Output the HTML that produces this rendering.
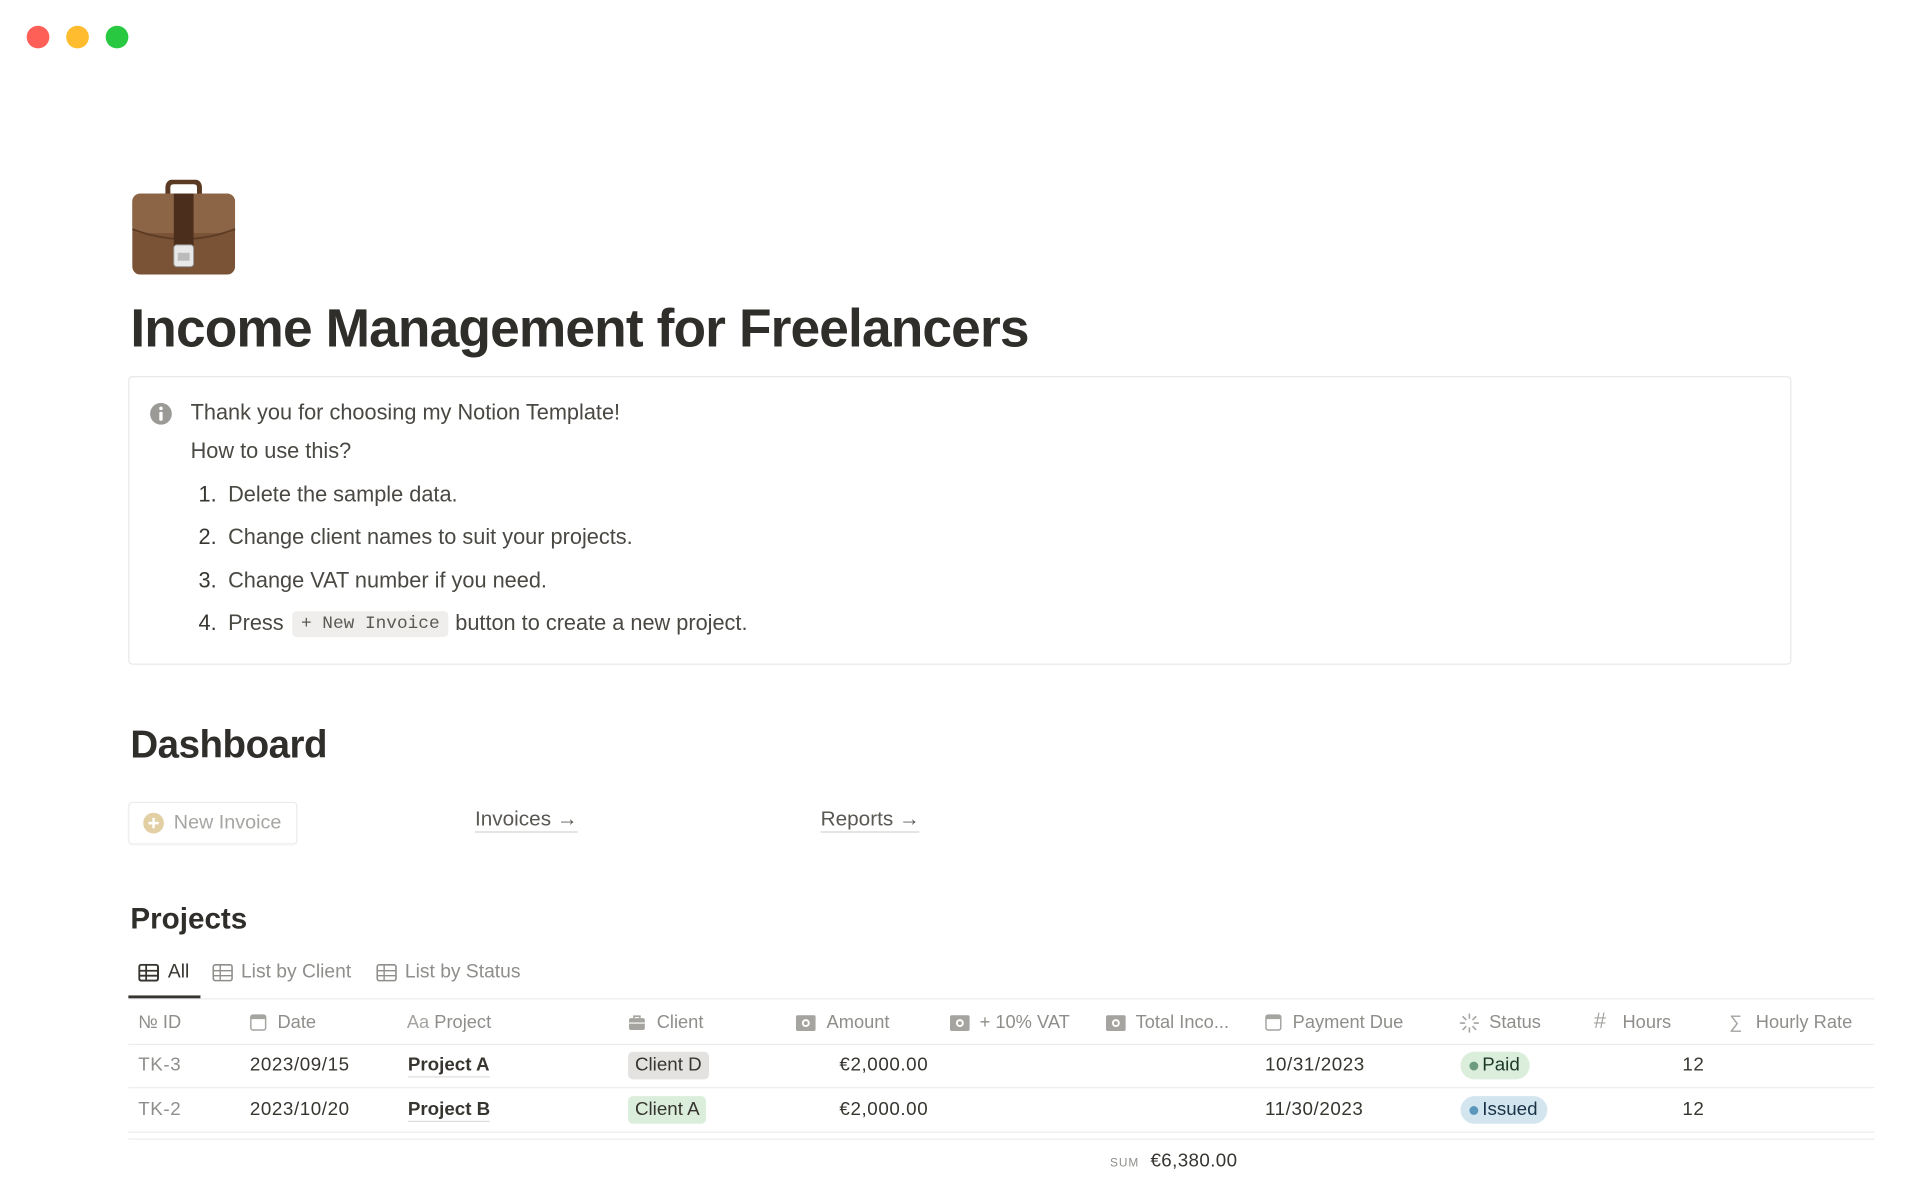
<!DOCTYPE html>
<html><head><meta charset="utf-8">
<style>
*{margin:0;padding:0;box-sizing:border-box}
body{width:1920px;height:1200px;background:#fff;position:relative;overflow:hidden;font-family:"Liberation Sans",sans-serif;color:#37352f}
#w{position:absolute;left:0;top:2px;width:1945px;height:1216px;transform:scale(.9875);transform-origin:0 0}
.a{position:absolute;white-space:nowrap}
.dot{position:absolute;width:23px;height:23px;border-radius:50%;top:24px}
.t{font-size:22px;color:#4a4843}
.h{font-size:18.5px;color:#8f8e8a;top:1022px}
.c{font-size:19px;top:1066px;letter-spacing:.6px}
.c2{font-size:19px;top:1111px;letter-spacing:.6px}
.chip{position:absolute;border-radius:5px;font-size:19px;padding:0 7px;height:28px;line-height:28px}
.ico{position:absolute;top:1024px}
.hl{position:absolute;left:130px;width:1768px;height:1px;background:#e9e9e7}
</style></head><body><div id="w">
<div class="dot" style="left:27px;background:#fe5f57"></div>
<div class="dot" style="left:67px;background:#febc2e"></div>
<div class="dot" style="left:107px;background:#28c840"></div>

<svg class="a" style="left:132px;top:180px" width="108" height="98" viewBox="0 0 108 98">
<path d="M38 16 V8 Q38 2 44 2 H64 Q70 2 70 8 V16" fill="none" stroke="#5a3a22" stroke-width="5"/>
<rect x="2" y="14" width="104" height="82" rx="8" fill="#7a5236"/>
<rect x="2" y="14" width="104" height="40" rx="8" fill="#8c6446"/>
<path d="M2 50 Q54 70 106 50" fill="none" stroke="#5e3c24" stroke-width="2"/>
<rect x="44" y="14" width="20" height="62" fill="#4b2f1c"/>
<rect x="44" y="66" width="20" height="22" rx="3" fill="#e8e8e8" stroke="#999" stroke-width="1"/>
<rect x="48" y="74" width="12" height="8" fill="#bbb"/>
</svg>

<div class="a" style="left:132px;top:300px;font-size:54px;font-weight:bold;letter-spacing:-0.9px;color:#2f2e2a">Income Management for Freelancers</div>

<div class="a" style="left:130px;top:379px;width:1684px;height:292px;border:1.5px solid #e3e2df;border-radius:4px"></div>
<svg class="a" style="left:151px;top:405px" width="24" height="24" viewBox="0 0 24 24"><circle cx="12" cy="12" r="11" fill="#9b9a97"/><circle cx="12" cy="6.5" r="1.8" fill="#fff"/><rect x="10.3" y="10" width="3.4" height="9" rx="1" fill="#fff"/></svg>
<div class="a t" style="left:193px;top:403px">Thank you for choosing my Notion Template!</div>
<div class="a t" style="left:193px;top:442px">How to use this?</div>
<div class="a t" style="left:201px;top:486px;color:#37352f">1.</div><div class="a t" style="left:231px;top:486px">Delete the sample data.</div>
<div class="a t" style="left:201px;top:529px;color:#37352f">2.</div><div class="a t" style="left:231px;top:529px">Change client names to suit your projects.</div>
<div class="a t" style="left:201px;top:573px;color:#37352f">3.</div><div class="a t" style="left:231px;top:573px">Change VAT number if you need.</div>
<div class="a t" style="left:201px;top:616px;color:#37352f">4.</div><div class="a t" style="left:231px;top:616px">Press</div>
<div class="a" style="left:296px;top:617px;width:158px;height:26px;background:#efeeec;border-radius:4px;font-family:'Liberation Mono',monospace;font-size:18px;line-height:26px;text-align:center;color:#5a5853">+ New Invoice</div>
<div class="a t" style="left:461px;top:616px">button to create a new project.</div>

<div class="a" style="left:132px;top:731px;font-size:39px;font-weight:bold;color:#2f2e2a;letter-spacing:-0.5px">Dashboard</div>

<div class="a" style="left:130px;top:810px;width:171px;height:43px;border:1px solid #e9e9e7;border-radius:4px;box-shadow:0 1px 2px rgba(0,0,0,.04)"></div>
<svg class="a" style="left:145px;top:821px" width="21" height="21" viewBox="0 0 20 20"><circle cx="10" cy="10" r="10" fill="#e2cfa4"/><path d="M10 5v10M5 10h10" stroke="#fff" stroke-width="2.4"/></svg>
<div class="a" style="left:176px;top:820px;font-size:20px;color:#a6a5a1">New Invoice</div>
<div class="a" style="left:481px;top:815px;font-size:21px;color:#5a5853;border-bottom:1.5px solid #c9c8c5;line-height:25px">Invoices →</div>
<div class="a" style="left:831px;top:815px;font-size:21px;color:#5a5853;border-bottom:1.5px solid #c9c8c5;line-height:25px">Reports →</div>

<div class="a" style="left:132px;top:912px;font-size:30px;font-weight:bold;color:#2f2e2a">Projects</div>

<svg class="a" style="left:140px;top:974px" width="21" height="18" viewBox="0 0 21 18"><rect x="1" y="1" width="19" height="16" rx="2" fill="none" stroke="#37352f" stroke-width="2"/><path d="M1 7h19M1 12h19M8 1v16" stroke="#37352f" stroke-width="1.8"/></svg>
<div class="a" style="left:170px;top:971px;font-size:19.5px;color:#37352f">All</div>
<svg class="a" style="left:215px;top:974px" width="21" height="18" viewBox="0 0 21 18"><rect x="1" y="1" width="19" height="16" rx="2" fill="none" stroke="#8f8e8a" stroke-width="1.6"/><path d="M1 7h19M1 12h19M8 1v16" stroke="#8f8e8a" stroke-width="1.4"/></svg>
<div class="a" style="left:244px;top:971px;font-size:19.5px;color:#8f8e8a">List by Client</div>
<svg class="a" style="left:381px;top:974px" width="21" height="18" viewBox="0 0 21 18"><rect x="1" y="1" width="19" height="16" rx="2" fill="none" stroke="#8f8e8a" stroke-width="1.6"/><path d="M1 7h19M1 12h19M8 1v16" stroke="#8f8e8a" stroke-width="1.4"/></svg>
<div class="a" style="left:410px;top:971px;font-size:19.5px;color:#8f8e8a">List by Status</div>
<div class="a" style="left:130px;top:1006px;width:73px;height:3px;background:#37352f"></div>
<div class="hl" style="top:1009px"></div>

<div class="a h" style="left:140px">№ ID</div>
<svg class="ico" style="left:253px" width="17" height="18" viewBox="0 0 17 18"><rect x="1" y="2" width="15" height="15" rx="2" fill="none" stroke="#a5a4a0" stroke-width="1.5"/><rect x="1" y="2" width="15" height="4" fill="#a5a4a0"/></svg>
<div class="a h" style="left:281px">Date</div>
<div class="a h" style="left:412px"><span style="color:#a5a4a0">Aa</span> Project</div>
<svg class="ico" style="left:636px" width="18" height="18" viewBox="0 0 18 18"><path d="M6 5V3h6v2" fill="none" stroke="#a5a4a0" stroke-width="1.6"/><rect x="1" y="5" width="16" height="12" rx="2" fill="#a5a4a0"/><path d="M1 10h16" stroke="#fff" stroke-width="1.2"/></svg>
<div class="a h" style="left:665px">Client</div>
<svg class="ico" style="left:806px;top:1026px" width="20" height="16" viewBox="0 0 20 16"><rect x="0" y="0" width="20" height="16" rx="2" fill="#a5a4a0"/><circle cx="10" cy="8" r="4" fill="#fff"/><circle cx="10" cy="8" r="2" fill="#a5a4a0"/></svg>
<div class="a h" style="left:837px">Amount</div>
<svg class="ico" style="left:962px;top:1026px" width="20" height="16" viewBox="0 0 20 16"><rect x="0" y="0" width="20" height="16" rx="2" fill="#a5a4a0"/><circle cx="10" cy="8" r="4" fill="#fff"/><circle cx="10" cy="8" r="2" fill="#a5a4a0"/></svg>
<div class="a h" style="left:992px">+ 10% VAT</div>
<svg class="ico" style="left:1120px;top:1026px" width="20" height="16" viewBox="0 0 20 16"><rect x="0" y="0" width="20" height="16" rx="2" fill="#a5a4a0"/><circle cx="10" cy="8" r="4" fill="#fff"/><circle cx="10" cy="8" r="2" fill="#a5a4a0"/></svg>
<div class="a h" style="left:1150px">Total Inco...</div>
<svg class="ico" style="left:1281px" width="17" height="18" viewBox="0 0 17 18"><rect x="1" y="2" width="15" height="15" rx="2" fill="none" stroke="#a5a4a0" stroke-width="1.5"/><rect x="1" y="2" width="15" height="4" fill="#a5a4a0"/></svg>
<div class="a h" style="left:1309px">Payment Due</div>
<svg class="ico" style="left:1478px" width="20" height="20" viewBox="0 0 20 20" stroke="#a5a4a0" stroke-width="1.6" stroke-linecap="round"><path d="M10 1v4M10 15v4M1 10h4M15 10h4M3.6 3.6l2.8 2.8M13.6 13.6l2.8 2.8M3.6 16.4l2.8-2.8M13.6 6.4l2.8-2.8"/></svg>
<div class="a h" style="left:1508px">Status</div>
<div class="a h" style="left:1614px;color:#a5a4a0;font-size:22px;top:1019px">#</div>
<div class="a h" style="left:1643px">Hours</div>
<div class="a h" style="left:1751px;color:#a5a4a0">∑</div>
<div class="a h" style="left:1778px">Hourly Rate</div>
<div class="hl" style="top:1055px"></div>

<div class="a c" style="left:140px;color:#8f8e8a">TK-3</div>
<div class="a c" style="left:253px">2023/09/15</div>
<div class="a c" style="left:413px;font-weight:bold;letter-spacing:0;border-bottom:1px solid #d5d4d1">Project A</div>
<div class="chip" style="left:636px;top:1063px;background:#e3e2e0">Client D</div>
<div class="a c" style="left:800px;width:140px;text-align:right">€2,000.00</div>
<div class="a c" style="left:1281px">10/31/2023</div>
<div class="chip" style="left:1479px;top:1063px;background:#dbeddb;border-radius:14px;padding:0 10px 0 22px;color:#1c3829">Paid</div>
<div class="a" style="left:1488px;top:1073px;width:9px;height:9px;border-radius:50%;background:#6c9b7d"></div>
<div class="a c" style="left:1660px;width:66px;text-align:right">12</div>
<div class="hl" style="top:1099px"></div>

<div class="a c2" style="left:140px;color:#8f8e8a">TK-2</div>
<div class="a c2" style="left:253px">2023/10/20</div>
<div class="a c2" style="left:413px;font-weight:bold;letter-spacing:0;border-bottom:1px solid #d5d4d1">Project B</div>
<div class="chip" style="left:636px;top:1108px;background:#dbeddb">Client A</div>
<div class="a c2" style="left:800px;width:140px;text-align:right">€2,000.00</div>
<div class="a c2" style="left:1281px">11/30/2023</div>
<div class="chip" style="left:1479px;top:1108px;background:#d3e5ef;border-radius:14px;padding:0 10px 0 22px;color:#183347">Issued</div>
<div class="a" style="left:1488px;top:1118px;width:9px;height:9px;border-radius:50%;background:#5b97bd"></div>
<div class="a c2" style="left:1660px;width:66px;text-align:right">12</div>
<div class="hl" style="top:1144px"></div>
<div class="hl" style="top:1151px"></div>

<div class="a" style="left:1124px;top:1168px;font-size:12px;color:#8f8e8a;letter-spacing:1px">SUM</div>
<div class="a" style="left:1165px;top:1163px;font-size:19px;letter-spacing:.4px">€6,380.00</div>
</div></body></html>
